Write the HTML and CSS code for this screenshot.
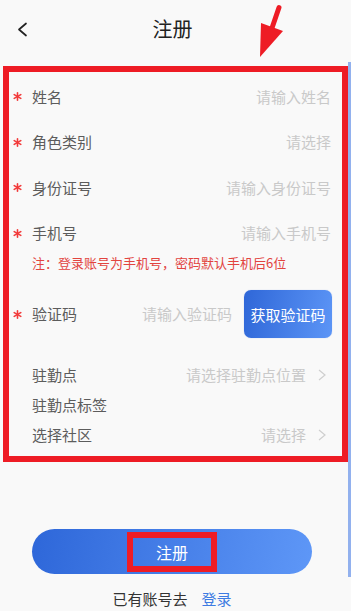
FILE: index.html
```html
<!DOCTYPE html>
<html lang="zh-CN">
<head>
<meta charset="utf-8">
<title>注册</title>
<link rel="stylesheet" href="styles.css">
</head>
<body>
<div class="page">
  <header class="header">
    <div class="back">
      <svg width="11" height="15" viewBox="0 0 11 15"><polyline points="9,1.5 2,7.5 9,13.5" fill="none" stroke="#222" stroke-width="1.7" stroke-linecap="round" stroke-linejoin="round"/></svg>
    </div>
    <div class="title">注册</div>
    <div></div>
  </header>

  <section class="form">
    <div class="row">
      <span class="req"><svg width="9" height="9" viewBox="0 0 9 9"><g stroke="#f23a3a" stroke-width="1.6" stroke-linecap="round"><line x1="4.5" y1="0.8" x2="4.5" y2="8.2"/><line x1="1.2" y1="2.6" x2="7.8" y2="6.4"/><line x1="1.2" y1="6.4" x2="7.8" y2="2.6"/></g></svg></span>
      <span class="label">姓名</span>
      <span class="ph">请输入姓名</span>
    </div>
    <div class="row">
      <span class="req"><svg width="9" height="9" viewBox="0 0 9 9"><g stroke="#f23a3a" stroke-width="1.6" stroke-linecap="round"><line x1="4.5" y1="0.8" x2="4.5" y2="8.2"/><line x1="1.2" y1="2.6" x2="7.8" y2="6.4"/><line x1="1.2" y1="6.4" x2="7.8" y2="2.6"/></g></svg></span>
      <span class="label">角色类别</span>
      <span class="ph">请选择</span>
    </div>
    <div class="row">
      <span class="req"><svg width="9" height="9" viewBox="0 0 9 9"><g stroke="#f23a3a" stroke-width="1.6" stroke-linecap="round"><line x1="4.5" y1="0.8" x2="4.5" y2="8.2"/><line x1="1.2" y1="2.6" x2="7.8" y2="6.4"/><line x1="1.2" y1="6.4" x2="7.8" y2="2.6"/></g></svg></span>
      <span class="label">身份证号</span>
      <span class="ph">请输入身份证号</span>
    </div>
    <div class="row">
      <span class="req"><svg width="9" height="9" viewBox="0 0 9 9"><g stroke="#f23a3a" stroke-width="1.6" stroke-linecap="round"><line x1="4.5" y1="0.8" x2="4.5" y2="8.2"/><line x1="1.2" y1="2.6" x2="7.8" y2="6.4"/><line x1="1.2" y1="6.4" x2="7.8" y2="2.6"/></g></svg></span>
      <span class="label">手机号</span>
      <span class="ph">请输入手机号</span>
    </div>
    <div class="note">注：登录账号为手机号，密码默认手机后6位</div>
    <div class="row row-code">
      <span class="req"><svg width="9" height="9" viewBox="0 0 9 9"><g stroke="#f23a3a" stroke-width="1.6" stroke-linecap="round"><line x1="4.5" y1="0.8" x2="4.5" y2="8.2"/><line x1="1.2" y1="2.6" x2="7.8" y2="6.4"/><line x1="1.2" y1="6.4" x2="7.8" y2="2.6"/></g></svg></span>
      <span class="label">验证码</span>
      <span class="ph">请输入验证码</span>
      <span class="code-btn">获取验证码</span>
    </div>
    <div class="row row-sm row-first-sm">
      <span class="req"></span>
      <span class="label">驻勤点</span>
      <span class="ph">请选择驻勤点位置</span>
      <svg class="chev" width="13" height="12" viewBox="0 0 13 12"><polyline points="1,1 7,6 1,11" fill="none" stroke="#cfcfcf" stroke-width="1.2"/></svg>
    </div>
    <div class="row row-sm">
      <span class="req"></span>
      <span class="label">驻勤点标签</span>
    </div>
    <div class="row row-sm">
      <span class="req"></span>
      <span class="label">选择社区</span>
      <span class="ph">请选择</span>
      <svg class="chev" width="13" height="12" viewBox="0 0 13 12"><polyline points="1,1 7,6 1,11" fill="none" stroke="#cfcfcf" stroke-width="1.2"/></svg>
    </div>
  </section>

  <div class="submit">
    <span class="submit-text">注册</span>
  </div>
  <div class="login">已有账号去<span class="login-link">登录</span></div>

  <svg class="arrow" width="34" height="60" viewBox="255 2 34 60">
    <line x1="279" y1="7.5" x2="272" y2="28" stroke="#ee1c25" stroke-width="5" stroke-linecap="round"/>
    <polygon points="261,23 283,31 260,57" fill="#ee1c25"/>
  </svg>
  <div class="scrollbar"></div>
</div>
</body>
</html>
```

FILE: styles.css
```css
html, body {
  margin: 0;
  padding: 0;
  background: #f9f9f9;
}

body {
  font-family: "Noto Sans CJK SC", "Noto Sans", sans-serif;
  width: 351px;
  height: 611px;
  overflow: hidden;
}

.page {
  position: relative;
  width: 351px;
  height: 611px;
}

.header {
  display: grid;
  grid-template-columns: 1fr auto 1fr;
  align-items: center;
  height: 58px;
  padding-right: 6px;
  margin-bottom: 8px;
}

.back {
  padding-left: 17px;
  display: flex;
  align-items: center;
}

.back svg {
  display: block;
}

.title {
  font-size: 20px;
  color: #222;
  line-height: 24px;
}

.form {
  margin: 0 3px;
  border: 6px solid #ee1c25;
  padding: 2px 11px 6px 4px;
}

.row {
  display: flex;
  align-items: center;
  height: 45.5px;
}

.req {
  width: 19px;
  flex: none;
  display: flex;
  align-items: center;
}

.req svg {
  display: block;
}

.label {
  font-size: 15px;
  color: #5c5c5c;
  line-height: 20px;
  white-space: nowrap;
}

.ph {
  margin-left: auto;
  font-size: 15px;
  color: #c9c9c9;
  line-height: 20px;
  white-space: nowrap;
}

.note {
  padding-left: 19px;
  font-size: 13px;
  line-height: 13px;
  color: #e2443f;
  white-space: nowrap;
}

.row-code {
  height: 48px;
  margin-top: 21px;
  margin-right: -1px;
}

.code-btn {
  margin-left: 12px;
  width: 88px;
  height: 48px;
  border-radius: 7px;
  background: linear-gradient(100deg, #2f67d8, #5c95f6);
  color: #fff;
  font-size: 15px;
  display: flex;
  align-items: center;
  justify-content: center;
  white-space: nowrap;
  box-shadow: 0 0 1px rgba(40, 90, 200, 0.4);
}

.row-sm {
  height: 30px;
}

.row-first-sm {
  margin-top: 22px;
}

.chev {
  display: block;
  margin-left: 12px;
  flex: none;
}

.submit {
  margin: 67px 0 0 32px;
  width: 280px;
  height: 45px;
  border-radius: 23px;
  background: linear-gradient(100deg, #2e67d9, #5e97f7);
  display: flex;
  align-items: center;
  justify-content: center;
}

.submit-text {
  box-sizing: border-box;
  width: 90px;
  height: 40px;
  border: 6px solid #ee1c25;
  margin-top: 1px;
  display: flex;
  align-items: center;
  justify-content: center;
  color: #fff;
  font-size: 16px;
}

.login {
  margin: 15px 0 0 32px;
  width: 280px;
  text-align: center;
  font-size: 15px;
  line-height: 20px;
  color: #333;
}

.login-link {
  margin-left: 14px;
  color: #3d7be2;
}

.arrow {
  position: absolute;
  left: 255px;
  top: 2px;
}

.scrollbar {
  position: absolute;
  left: 348px;
  top: 62px;
  width: 3px;
  height: 515px;
  background: #92b1ee;
}
```
